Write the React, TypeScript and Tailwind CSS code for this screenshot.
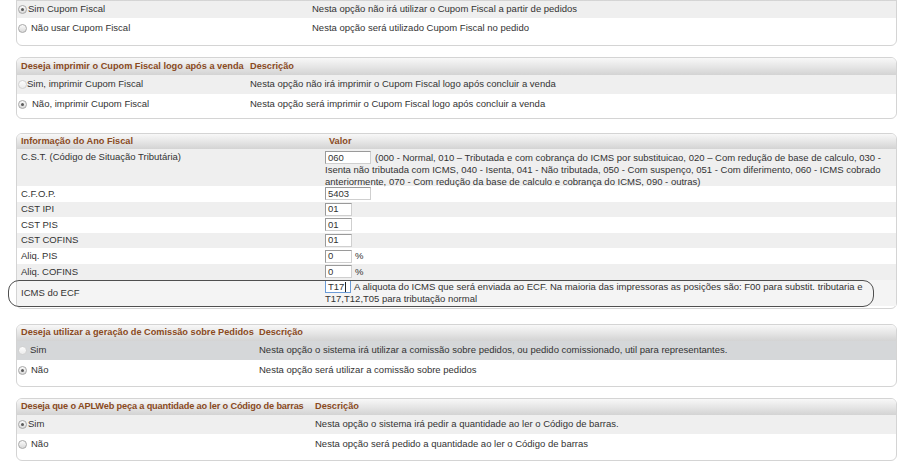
import React from "react";

const bodyFont = "font-['Liberation_Sans',Arial,Helvetica,sans-serif]";

function Radio({ checked, faded }: { checked?: boolean; faded?: boolean }) {
  return (
    <span
      className={`inline-flex items-center justify-center w-[9px] h-[9px] rounded-full border shrink-0 bg-linear-to-b ${
        faded
          ? "border-[#d2d2d2] from-[#fdfdfd] to-[#ececec]"
          : "border-[#a8a8a8] from-[#fbfbfb] to-[#d9d9d9]"
      }`}
    >
      {checked && <span className="w-[3px] h-[3px] rounded-full bg-[#5a5a5a]" />}
    </span>
  );
}

function Header({
  col,
  a,
  b,
  h,
  bPad = 0,
  tight,
}: {
  col: number;
  a: string;
  b: string;
  h: string;
  bPad?: number;
  tight?: boolean;
}) {
  return (
    <div
      className={`grid ${h} items-center rounded-t-[5px] bg-linear-to-b from-[#f8f8f8] via-[#e6e6e6] to-[#d3d3d3] font-['Liberation_Sans',Arial,sans-serif] font-bold text-[9.2px] text-[#8a4a1d]`}
      style={{ gridTemplateColumns: `${col}px 1fr` }}
    >
      <div className={`pl-[4px] whitespace-nowrap ${tight ? "tracking-[-0.15px]" : ""}`}>{a}</div>
      <div className="whitespace-nowrap" style={{ paddingLeft: bPad }}>
        {b}
      </div>
    </div>
  );
}

type Opt = { label: string; desc: string; checked?: boolean; faded?: boolean; gap: string; bg: string; h: string };

function OptionRow({ col, o }: { col: number; o: Opt }) {
  return (
    <div className={`grid ${o.h} ${o.bg} items-center`} style={{ gridTemplateColumns: `${col}px 1fr` }}>
      <div className={`flex items-center pl-[1px] ${o.gap} whitespace-nowrap`}>
        <Radio checked={o.checked} faded={o.faded} />
        <span>{o.label}</span>
      </div>
      <div className="whitespace-nowrap">{o.desc}</div>
    </div>
  );
}

function Panel({ children, className = "" }: { children: React.ReactNode; className?: string }) {
  return (
    <div className={`ml-[16px] mr-[3px] border border-[#d4d4d4] rounded-[6px] bg-white ${className}`}>{children}</div>
  );
}

function Box({ w, text, focus }: { w: string; text: string; focus?: boolean }) {
  return (
    <span
      className={`inline-flex items-center h-[13px] ${w} pl-[2px] bg-white border shrink-0 ${
        focus ? "border-[#6b9bd6]" : "border-t-[#9a9a9a] border-l-[#9a9a9a] border-r-[#cfcfcf] border-b-[#cfcfcf]"
      }`}
    >
      {text}
      {focus && <span className="ml-[1px] w-px h-[10px] bg-[#222]" />}
    </span>
  );
}

function FieldRow({ label, bg, children }: { label: string; bg: string; children: React.ReactNode }) {
  return (
    <div className={`grid grid-cols-[308px_1fr] h-[15.6px] items-center ${bg}`}>
      <div className="pl-[4px] whitespace-nowrap">{label}</div>
      <div className="flex items-center">{children}</div>
    </div>
  );
}

export default function App() {
  const gray = "bg-[#efefef]";
  const white = "bg-white";
  return (
    <div className={`h-[469px] w-[900px] overflow-hidden bg-white ${bodyFont} text-[9.5px] text-[#333]`}>
      {/* Panel 1 (top cut off) */}
      <Panel className="-mt-[17px] pb-[7px]">
        <div className="h-[17px] rounded-t-[5px] bg-linear-to-b from-[#f8f8f8] via-[#e6e6e6] to-[#d3d3d3]" />
        <OptionRow
          col={295}
          o={{ label: "Sim Cupom Fiscal", desc: "Nesta opção não irá utilizar o Cupom Fiscal a partir de pedidos", checked: true, gap: "gap-[1px]", bg: gray, h: "h-[17px]" }}
        />
        <OptionRow
          col={295}
          o={{ label: "Não usar Cupom Fiscal", desc: "Nesta opção será utilizado Cupom Fiscal no pedido", gap: "gap-[4px]", bg: white, h: "h-[20px]" }}
        />
      </Panel>

      {/* Panel 2 */}
      <Panel className="mt-[11px] pb-[4px]">
        <Header col={233} a="Deseja imprimir o Cupom Fiscal logo após a venda" b="Descrição" h="h-[17px]" />
        <OptionRow
          col={233}
          o={{ label: "Sim, imprimir Cupom Fiscal", desc: "Nesta opção não irá imprimir o Cupom Fiscal logo após concluir a venda", faded: true, gap: "gap-[0px]", bg: gray, h: "h-[19px]" }}
        />
        <OptionRow
          col={233}
          o={{ label: "Não, imprimir Cupom Fiscal", desc: "Nesta opção será imprimir o Cupom Fiscal logo após concluir a venda", checked: true, gap: "gap-[5px]", bg: white, h: "h-[20px]" }}
        />
      </Panel>

      {/* Panel 3 */}
      <Panel className="mt-[14px] pb-[2px]">
        <Header col={308} a="Informação do Ano Fiscal" b="Valor" h="h-[15px]" bPad={4} />
        <div className={`grid grid-cols-[308px_1fr] h-[37px] ${gray}`}>
          <div className="pl-[4px] pt-[2px] h-[15px] flex items-center whitespace-nowrap">C.S.T. (Código de Situação Tributária)</div>
          <div className="pt-[2px] whitespace-nowrap leading-[11.5px]">
            <div className="flex items-center gap-[4px] h-[13px]">
              <Box w="w-[46px]" text="060" />
              <span>(000 - Normal, 010 – Tributada e com cobrança do ICMS por substituicao, 020 – Com redução de base de calculo, 030 -</span>
            </div>
            <div>Isenta não tributada com ICMS, 040 - Isenta, 041 - Não tributada, 050 - Com suspenço, 051 - Com diferimento, 060 - ICMS cobrado</div>
            <div>anteriormente, 070 - Com redução da base de calculo e cobrança do ICMS, 090 - outras)</div>
          </div>
        </div>
        <FieldRow label="C.F.O.P." bg={white}>
          <Box w="w-[46px]" text="5403" />
        </FieldRow>
        <FieldRow label="CST IPI" bg={gray}>
          <Box w="w-[27px]" text="01" />
        </FieldRow>
        <FieldRow label="CST PIS" bg={white}>
          <Box w="w-[27px]" text="01" />
        </FieldRow>
        <FieldRow label="CST COFINS" bg={gray}>
          <Box w="w-[27px]" text="01" />
        </FieldRow>
        <FieldRow label="Aliq. PIS" bg={white}>
          <Box w="w-[27px]" text="0" />
          <span className="ml-[3px]">%</span>
        </FieldRow>
        <FieldRow label="Aliq. COFINS" bg={gray}>
          <Box w="w-[27px]" text="0" />
          <span className="ml-[3px]">%</span>
        </FieldRow>
        <div className="relative grid grid-cols-[308px_1fr] h-[26.5px] bg-[#f4f4f4]">
          <div className="pl-[4px] flex items-center whitespace-nowrap">ICMS do ECF</div>
          <div className="pt-[1px] whitespace-nowrap leading-[11.5px]">
            <div className="flex items-center gap-[3px] h-[12px]">
              <Box w="w-[26px]" text="T17" focus />
              <span>A aliquota do ICMS que será enviada ao ECF. Na maioria das impressoras as posições são: F00 para substit. tributaria e</span>
            </div>
            <div>T17,T12,T05 para tributação normal</div>
          </div>
          <div className="pointer-events-none absolute -left-[9px] right-[22px] top-0 -bottom-[1px] rounded-[11px] border border-[#4f4f4f]" />
        </div>
      </Panel>

      {/* Panel 4 */}
      <Panel className="mt-[15px] pb-[5px]">
        <Header col={242} a="Deseja utilizar a geração de Comissão sobre Pedidos" b="Descrição" h="h-[16px]" />
        <OptionRow
          col={242}
          o={{ label: "Sim", desc: "Nesta opção o sistema irá utilizar a comissão sobre pedidos, ou pedido comissionado, util para representantes.", faded: true, gap: "gap-[3px]", bg: "bg-[#d5d7d9]", h: "h-[19px]" }}
        />
        <OptionRow
          col={242}
          o={{ label: "Não", desc: "Nesta opção será utilizar a comissão sobre pedidos", checked: true, gap: "gap-[4px]", bg: white, h: "h-[21px]" }}
        />
      </Panel>

      {/* Panel 5 */}
      <Panel className="mt-[11px] pb-[6px]">
        <Header col={298} a="Deseja que o APLWeb peça a quantidade ao ler o Código de barras" b="Descrição" h="h-[16px]" tight />
        <OptionRow
          col={298}
          o={{ label: "Sim", desc: "Nesta opção o sistema irá pedir a quantidade ao ler o Código de barras.", checked: true, gap: "gap-[1px]", bg: gray, h: "h-[19px]" }}
        />
        <OptionRow
          col={298}
          o={{ label: "Não", desc: "Nesta opção será pedido a quantidade ao ler o Código de barras", gap: "gap-[4px]", bg: white, h: "h-[20px]" }}
        />
      </Panel>
    </div>
  );
}
